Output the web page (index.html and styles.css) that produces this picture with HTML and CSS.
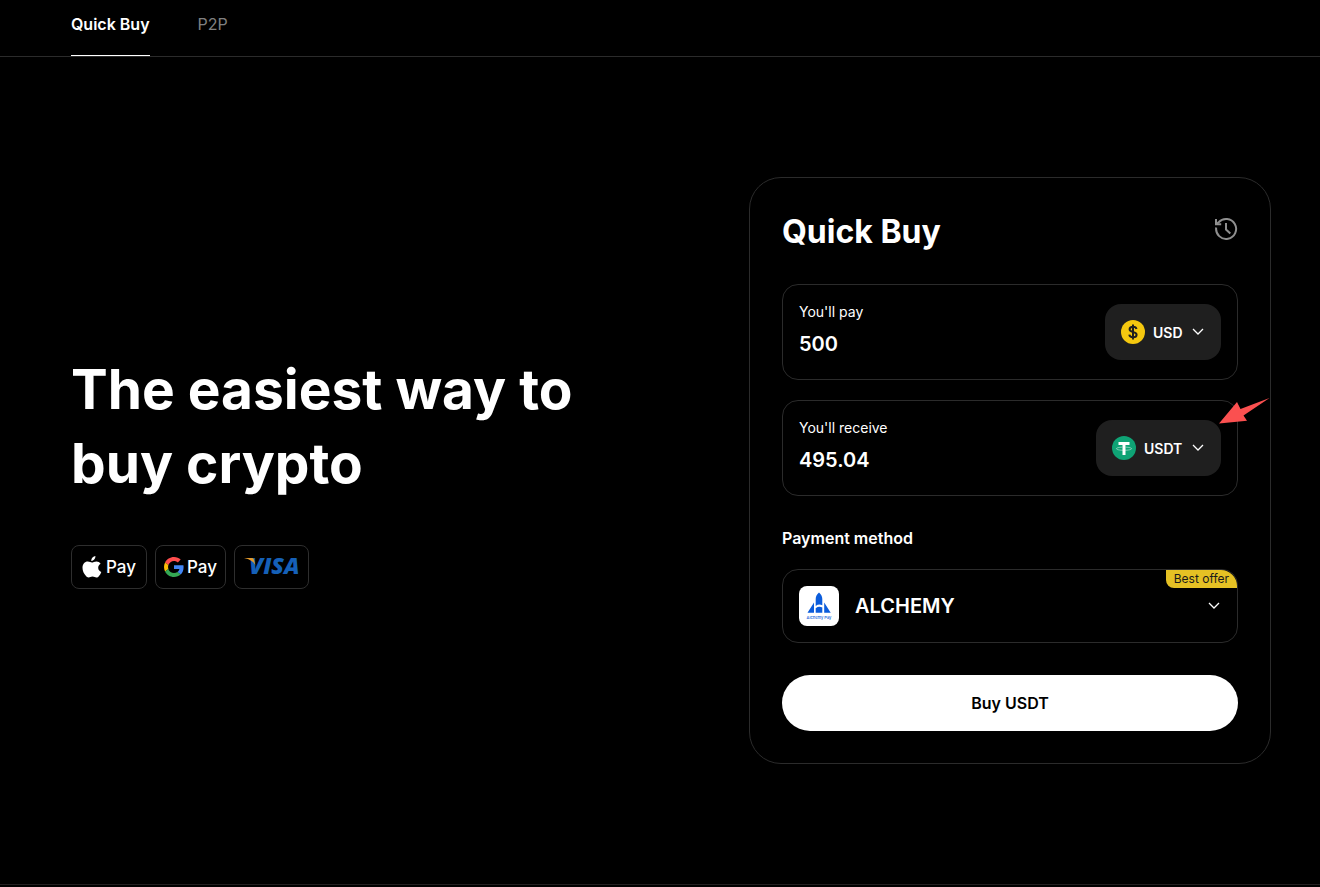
FILE: index.html
```html
<!DOCTYPE html>
<html lang="en">
<head>
    <meta charset="UTF-8">
    <meta name="viewport" content="width=device-width, initial-scale=1.0">
    <title>Quick Buy</title>
    <link rel="stylesheet" href="styles.css">
</head>
<body>

<nav class="tabs">
    <a class="tab active" href="#quick-buy">Quick Buy</a>
    <a class="tab" href="#p2p">P2P</a>
</nav>

<main class="page">
    <section class="intro">
        <h1>The easiest way to buy crypto</h1>

        <!-- Accepted payments -->
        <div class="brands">
            <div class="brand">
                <svg width="20" height="22" viewBox="0 0 20 22" fill="#fff">
                    <path d="M13.4 0c.1 1.400-.4 2.600-1.200 3.500-.8.900-1.900 1.500-2.900 1.400-.1-1.200.4-2.400 1.200-3.300C11.300.7 12.500.1 13.400 0zM18.600 7.700c-1.500.9-2.400 2.200-2.400 4 0 2 1.200 3.500 3.100 4.200-.5 1.500-1.300 2.900-2.300 4.100-.8 1-1.600 1.500-2.600 1.500-1.400 0-2-.9-3.900-.9s-2.500.9-3.900.9c-1.100 0-2-.7-2.800-1.700C1.900 17.600.5 14.800.5 11.700.5 8.200 2.700 5.500 5.800 5.500c1.700 0 3 1 4.100 1 1.100 0 2.600-1.100 4.600-1.100 1.600 0 3.100.8 4.100 2.300z"/>
                </svg>
                <span>Pay</span>
            </div>
            <div class="brand google">
                <svg width="20" height="20" viewBox="0 0 48 48">
                    <path fill="#ff4d4d" d="M24 9.500c3.540 0 6.710 1.220 9.210 3.600l6.850-6.850C35.900 2.380 30.470 0 24 0 14.620 0 6.510 5.380 2.560 13.220l7.980 6.190C12.430 13.720 17.740 9.500 24 9.500z"/>
                    <path fill="#4285f4" d="M46.980 24.550c0-1.570-.15-3.090-.38-4.550H24v9.020h12.940c-.58 2.960-2.260 5.480-4.780 7.180l7.730 6c4.510-4.180 7.090-10.360 7.090-17.650z"/>
                    <path fill="#fbbc05" d="M10.530 28.590c-.48-1.450-.76-2.990-.76-4.590s.27-3.140.76-4.590l-7.980-6.190C.92 16.460 0 20.120 0 24s.92 7.540 2.560 10.780l7.970-6.190z"/>
                    <path fill="#34a853" d="M24 48c6.480 0 11.930-2.130 15.890-5.810l-7.730-6c-2.150 1.450-4.920 2.300-8.160 2.300-6.260 0-11.570-4.220-13.470-9.910l-7.980 6.190C6.510 42.620 14.620 48 24 48z"/>
                </svg>
                <span>Pay</span>
            </div>
            <div class="brand visa-brand">
                <svg width="58" height="36" viewBox="0 0 58 36">
                    <text class="visa" x="5" y="25">VISA</text>
                    <path fill="#e39a2d" d="M0 9h7.500c1.400 0 2.200.6 2.500 1.800L11.300 16C9.600 12.500 5.700 10.200 0 9z"/>
                </svg>
            </div>
        </div>
    </section>

    <form class="card">
        <div class="card-head">
            <h2>Quick Buy</h2>
            <button type="button" class="history" aria-label="Order history">
                <svg width="24" height="24" viewBox="0 0 24 24" fill="none" stroke="#8f8f8f" stroke-width="2">
                    <path d="M2.200 10.500A10 10 0 1 0 4.600 5.300L2.500 7"/>
                    <path d="M2 2v5.200h5.200M12 6v6.500l4.300 4"/>
                </svg>
            </button>
        </div>

        <div class="field">
            <div class="amount">
                <label for="pay">You'll pay</label>
                <input type="text" id="pay" value="500">
            </div>
            <label class="currency">
                <svg width="24" height="24" viewBox="0 0 24 24">
                    <circle cx="12" cy="12" r="12" fill="#f5c80f"/>
                    <path d="M15.500 9C15.200 7.600 14 6.800 12 6.800c-2.100 0-3.400.9-3.400 2.500 0 3.600 7 1.700 7 5.400 0 1.600-1.400 2.500-3.600 2.500-2.100 0-3.500-.9-3.700-2.500M12 4.500v15" fill="none" stroke="#1f1f1f" stroke-width="2"/>
                </svg>
                <select aria-label="Currency to pay">
                    <option>USD</option>
                </select>
                <svg class="chevron" width="14" height="14" viewBox="0 0 14 14"><path d="M2 4l5 5 5-5"/></svg>
            </label>
        </div>

        <div class="field">
            <div class="amount">
                <label for="receive">You'll receive</label>
                <input type="text" id="receive" value="495.04" readonly>
            </div>
            <label class="currency">
                <svg width="24" height="24" viewBox="0 0 24 24">
                    <circle cx="12" cy="12" r="12" fill="#0fa375"/>
                    <path d="M6.500 6h11v3h-4v10h-3V9h-4z" fill="#fff"/>
                    <path d="M10.300 11.100c-3.500.2-5.900.8-5.900 1.600 0 .9 3.400 1.600 7.600 1.600s7.600-.7 7.600-1.600c0-.8-2.400-1.400-5.900-1.600" fill="none" stroke="#fff" stroke-width=".7" opacity=".65"/>
                </svg>
                <select aria-label="Currency to receive">
                    <option>USDT</option>
                </select>
                <svg class="chevron" width="14" height="14" viewBox="0 0 14 14"><path d="M2 4l5 5 5-5"/></svg>
            </label>
            <svg class="arrow" width="52" height="28" viewBox="0 0 52 28">
                <path fill="#fb5050" d="M1 26.500L19 5l3.500 7L51.500 1 25.500 18.500l3.500 5.200z"/>
            </svg>
        </div>

        <label class="method-label" for="method">Payment method</label>
        <div class="method">
            <svg width="40" height="40" viewBox="0 0 40 40">
                <rect width="40" height="40" rx="8" fill="#fff"/>
                <g fill="#0b5cdb">
                    <path d="M20 6.500c2.200 1.800 3.300 4 3.300 6.500v6.200c-2.200-1.100-4.400-1-6.600.8v-7c0-2.500 1.100-4.700 3.300-6.500z"/>
                    <path d="M16.700 22.200c2.200-1.800 4.400-1.900 6.600-.8v5.300h-6.600z"/>
                    <path d="M15 16.500v10.200H8.500zM25.200 16.500v10.200h6.500z"/>
                </g>
                <text class="logo-text" x="20" y="33" text-anchor="middle">Alchemy Pay</text>
            </svg>
            <select id="method">
                <option>ALCHEMY</option>
            </select>
            <svg class="chevron" width="14" height="14" viewBox="0 0 14 14"><path d="M2 4l5 5 5-5"/></svg>
            <span class="offer">Best offer</span>
        </div>

        <button type="submit" class="buy">Buy USDT</button>
    </form>
</main>

<footer class="footer"></footer>

</body>
</html>
```
FILE: styles.css
```css
* {
    box-sizing: border-box;
}
body {
    margin: 0;
    min-height: 100vh;
    display: flex;
    flex-direction: column;
    background: #000;
    color: #fff;
    font-family: Inter, "Liberation Sans", sans-serif;
}
input, select, button {
    font-family: inherit;
    color: inherit;
    background: none;
    border: none;
    margin: 0;
    padding: 0;
    outline: none;
}
select {
    appearance: none;
    cursor: pointer;
}
button {
    cursor: pointer;
}
h1, h2 {
    margin: 0;
    font-weight: 700;
}
svg {
    display: block;
    flex: none;
}

.tabs {
    display: flex;
    gap: 48px;
    height: 57px;
    padding: 0 71px;
    border-bottom: 1px solid #2b2b2b;
}
.tab {
    padding-top: 12px;
    font-size: 16px;
    line-height: 24px;
    color: #808080;
    text-decoration: none;
}
.tab.active {
    color: #fff;
    font-weight: 600;
    border-bottom: 1px solid #fff;
}

.page {
    flex: 1;
    display: flex;
    align-items: center;
    justify-content: space-between;
    gap: 48px;
    padding: 48px 49px 48px 71px;
}
.intro {
    flex: 0 1 560px;
}
.intro h1 {
    font-size: 55px;
    line-height: 74px;
}
.brands {
    display: flex;
    gap: 8px;
    margin-top: 45px;
}
.brand {
    display: flex;
    align-items: center;
    gap: 4px;
    height: 44px;
    padding: 0 10px;
    border: 1px solid #2e2e2e;
    border-radius: 8px;
    font-size: 17px;
    font-weight: 500;
}
.brand.google {
    gap: 3px;
    padding: 0 8px;
}
.brand.visa-brand {
    padding: 0 6px 0 9px;
}
.visa {
    font: italic 800 23px "Open Sans", sans-serif;
    fill: #1560b8;
}

.card {
    flex: 0 1 522px;
    padding: 32px;
    border: 1px solid #2b2b2b;
    border-radius: 32px;
}
.card-head {
    display: flex;
    justify-content: space-between;
    align-items: flex-start;
    margin-bottom: 30px;
}
.card-head h2 {
    font-size: 32px;
    line-height: 44px;
}
.history {
    padding-top: 7px;
}
.field {
    position: relative;
    display: flex;
    align-items: center;
    justify-content: space-between;
    height: 96px;
    padding: 0 16px;
    border: 1px solid #2b2b2b;
    border-radius: 16px;
    margin-bottom: 20px;
}
.amount {
    flex: 1;
    display: flex;
    flex-direction: column;
    gap: 8px;
    min-width: 0;
    padding-bottom: 5px;
}
.amount label {
    font-size: 14px;
    line-height: 20px;
}
.amount input {
    width: 100%;
    height: 28px;
    font-size: 20px;
    font-weight: 600;
}
.currency {
    display: flex;
    align-items: center;
    gap: 8px;
    height: 56px;
    padding: 0 16px;
    border-radius: 16px;
    background: #1f1f1f;
}
.currency select {
    font-size: 14px;
    font-weight: 600;
}
.chevron {
    fill: none;
    stroke: #fff;
    stroke-width: 1.3;
    pointer-events: none;
}
/* pointer to the coin selector */
.arrow {
    position: absolute;
    top: -4px;
    right: -33px;
}

.method-label {
    display: block;
    margin: 30px 0 19px;
    font-size: 16px;
    line-height: 24px;
    font-weight: 600;
}
.method {
    position: relative;
    display: flex;
    align-items: center;
    gap: 16px;
    height: 74px;
    padding: 0 16px;
    border: 1px solid #2b2b2b;
    border-radius: 16px;
}
.method select {
    flex: 1;
    font-size: 20px;
    font-weight: 600;
}
.logo-text {
    font: 500 4px Inter, sans-serif;
    fill: #0b5cdb;
}
.offer {
    position: absolute;
    top: 0;
    right: 0;
    padding: 0 8px;
    border-radius: 0 16px 0 8px;
    background: #e5c124;
    color: #1a1a1a;
    font-size: 12px;
    line-height: 18px;
}
.buy {
    width: 100%;
    height: 56px;
    margin-top: 32px;
    border-radius: 28px;
    background: #fff;
    color: #000;
    font-size: 16px;
    font-weight: 600;
}

.footer {
    height: 3px;
    border-top: 1px solid #231f20;
}
```
